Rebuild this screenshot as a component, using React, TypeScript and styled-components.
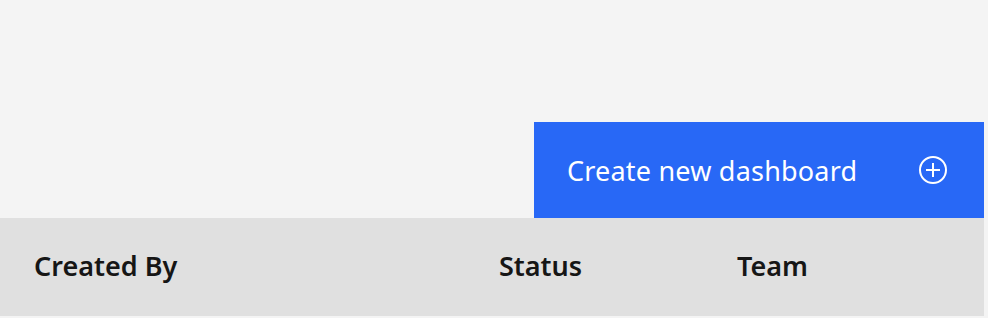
import React from "react"
import styled, { createGlobalStyle } from "styled-components"

const GlobalStyle = createGlobalStyle`
  html, body {
    margin: 0;
    padding: 0;
    background-color: #f4f4f4;
  }
  * {
    box-sizing: border-box;
  }
`

const columns = ["Created By", "Status", "Team"]

const AddAltIcon: React.FC = () => (
  <svg width="32" height="32" viewBox="0 0 32 32" fill="none">
    <circle cx="16" cy="16" r="13" stroke="#fff" strokeWidth="2" />
    <path d="M16 9v14M9 16h14" stroke="#fff" strokeWidth="2" />
  </svg>
)

const App: React.FC = () => {
  return (
    <>
      <GlobalStyle />
      <Page>
        <Toolbar>
          <PrimaryButton type="button">
            <ButtonLabel>Create new dashboard</ButtonLabel>
            <AddAltIcon />
          </PrimaryButton>
        </Toolbar>
        <TableHead>
          {columns.map((col) => (
            <HeadCell key={col}>{col}</HeadCell>
          ))}
        </TableHead>
      </Page>
    </>
  )
}

const Page = styled.div`
  display: flex;
  flex-direction: column;

  width: 984px;
  padding-top: 122px;

  font-family: "Noto Sans", "Open Sans", sans-serif;
`

const Toolbar = styled.div`
  display: flex;
  justify-content: flex-end;
`

const PrimaryButton = styled.button`
  display: flex;
  align-items: center;
  justify-content: space-between;

  width: 450px;
  height: 96px;
  padding: 0 35px 0 33px;
  border: none;
  border-radius: 0;

  background-color: #2868f6;
  color: #fff;
  font-family: inherit;
  cursor: pointer;
`

const ButtonLabel = styled.span`
  font-size: 27px;
  font-weight: 400;
  letter-spacing: 0.2px;
`

const TableHead = styled.div`
  display: grid;
  grid-template-columns: 465px 238px 1fr;
  align-items: center;

  height: 98px;
  padding-bottom: 4px;
  background-color: #e0e0e0;
`

const HeadCell = styled.div`
  padding-left: 34px;

  font-size: 27px;
  font-weight: 600;
  color: #161616;
`

export default App
